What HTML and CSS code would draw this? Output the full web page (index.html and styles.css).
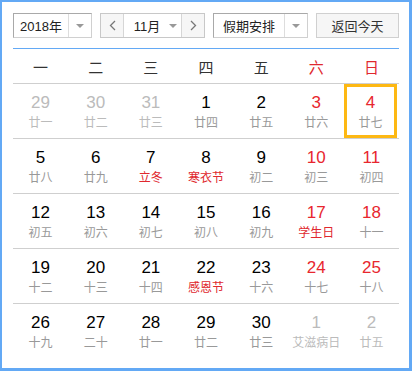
FILE: index.html
```html
<!DOCTYPE html>
<html lang="zh-CN">
<head>
    <meta charset="UTF-8">
    <title>万年历</title>
    <link rel="stylesheet" href="styles.css">
</head>
<body>
    <div class="calendar">
        <!-- Toolbar -->
        <div class="toolbar">
            <div class="select year">
                <span class="select-text">2018年</span>
                <span class="select-arrow"><i class="caret"></i></span>
            </div>
            <div class="month-group">
                <span class="nav-btn">
                    <svg width="7" height="11" viewBox="0 0 7 11"><polyline points="6,1 1.5,5.5 6,10" fill="none" stroke="#777" stroke-width="1.3"/></svg>
                </span>
                <span class="month-select">11月<i class="caret"></i></span>
                <span class="nav-btn">
                    <svg width="7" height="11" viewBox="0 0 7 11"><polyline points="1,1 5.5,5.5 1,10" fill="none" stroke="#777" stroke-width="1.3"/></svg>
                </span>
            </div>
            <div class="select holiday">
                <span class="select-text">假期安排</span>
                <span class="select-arrow"><i class="caret"></i></span>
            </div>
            <button class="today-btn">返回今天</button>
        </div>

        <!-- Week header -->
        <div class="week">
            <span>一</span><span>二</span><span>三</span><span>四</span><span>五</span>
            <span class="weekend">六</span><span class="weekend">日</span>
        </div>

        <!-- Days -->
        <div class="days">
            <div class="row">
                <div class="day other"><b>29</b><small>廿一</small></div>
                <div class="day other"><b>30</b><small>廿二</small></div>
                <div class="day other"><b>31</b><small>廿三</small></div>
                <div class="day"><b>1</b><small>廿四</small></div>
                <div class="day"><b>2</b><small>廿五</small></div>
                <div class="day weekend"><b>3</b><small>廿六</small></div>
                <div class="day weekend today"><b>4</b><small>廿七</small></div>
            </div>
            <div class="row">
                <div class="day"><b>5</b><small>廿八</small></div>
                <div class="day"><b>6</b><small>廿九</small></div>
                <div class="day"><b>7</b><small class="fest">立冬</small></div>
                <div class="day"><b>8</b><small class="fest">寒衣节</small></div>
                <div class="day"><b>9</b><small>初二</small></div>
                <div class="day weekend"><b>10</b><small>初三</small></div>
                <div class="day weekend"><b>11</b><small>初四</small></div>
            </div>
            <div class="row">
                <div class="day"><b>12</b><small>初五</small></div>
                <div class="day"><b>13</b><small>初六</small></div>
                <div class="day"><b>14</b><small>初七</small></div>
                <div class="day"><b>15</b><small>初八</small></div>
                <div class="day"><b>16</b><small>初九</small></div>
                <div class="day weekend"><b>17</b><small class="fest">学生日</small></div>
                <div class="day weekend"><b>18</b><small>十一</small></div>
            </div>
            <div class="row">
                <div class="day"><b>19</b><small>十二</small></div>
                <div class="day"><b>20</b><small>十三</small></div>
                <div class="day"><b>21</b><small>十四</small></div>
                <div class="day"><b>22</b><small class="fest">感恩节</small></div>
                <div class="day"><b>23</b><small>十六</small></div>
                <div class="day weekend"><b>24</b><small>十七</small></div>
                <div class="day weekend"><b>25</b><small>十八</small></div>
            </div>
            <div class="row">
                <div class="day"><b>26</b><small>十九</small></div>
                <div class="day"><b>27</b><small>二十</small></div>
                <div class="day"><b>28</b><small>廿一</small></div>
                <div class="day"><b>29</b><small>廿二</small></div>
                <div class="day"><b>30</b><small>廿三</small></div>
                <div class="day other"><b>1</b><small>艾滋病日</small></div>
                <div class="day other"><b>2</b><small>廿五</small></div>
            </div>
        </div>
    </div>
</body>
</html>
```

FILE: styles.css
```css
* {
    margin: 0;
    padding: 0;
    box-sizing: border-box;
}

body {
    font-family: 'Liberation Sans', 'Noto Sans CJK SC', sans-serif;
    background: #fff;
    color: #333;
}

.calendar {
    width: 412px;
    height: 371px;
    border: 3px solid #63a9f5;
    border-top-width: 2px;
    border-left-width: 2px;
    padding: 11px 10px 0 11px;
}

/* Toolbar */
.toolbar {
    display: flex;
    justify-content: space-between;
    height: 36px;
    padding-bottom: 10px;
    border-bottom: 1px solid #63a9f5;
}

.select {
    display: flex;
    height: 25px;
    border: 1px solid #a9a9a9;
    border-right-color: #d0d0d0;
    border-bottom-color: #d0d0d0;
    font-size: 13px;
    background: #fff;
}

.year { width: 79px; }
.holiday { width: 95px; }

.select-text {
    flex: 1;
    display: flex;
    align-items: center;
    justify-content: center;
    font-family: 'Liberation Sans', 'Noto Sans CJK SC', sans-serif;
    color: #222;
}

.select-arrow {
    width: 23px;
    display: flex;
    align-items: center;
    justify-content: center;
    border-left: 1px solid #ddd;
}

.caret {
    display: inline-block;
    width: 0;
    height: 0;
    border-left: 4px solid transparent;
    border-right: 4px solid transparent;
    border-top: 4px solid #999;
}

.month-group {
    display: flex;
    width: 105px;
    height: 25px;
    border: 1px solid #c8c8c8;
}

.nav-btn {
    width: 22px;
    display: flex;
    align-items: center;
    justify-content: center;
    background: #f6f6f6;
}

.month-select {
    flex: 1;
    display: flex;
    align-items: center;
    justify-content: center;
    gap: 9px;
    padding-left: 6px;
    border-left: 1px solid #d6d6d6;
    border-right: 1px solid #d6d6d6;
    font-size: 13px;
    color: #222;
}

.today-btn {
    width: 83px;
    height: 25px;
    border: 1px solid #d0d0d0;
    background: #f6f6f6;
    font-family: 'Noto Sans CJK SC', sans-serif;
    font-size: 13px;
    color: #333;
}

/* Week header */
.week {
    display: grid;
    grid-template-columns: repeat(7, 1fr);
    height: 35px;
    border-bottom: 1px solid #cfcfcf;
    font-family: 'Noto Sans CJK SC', sans-serif;
    font-size: 15px;
    color: #333;
}

.week span {
    display: flex;
    align-items: center;
    justify-content: center;
}

.week .weekend {
    color: #e0282e;
}

/* Day grid */
.row {
    display: grid;
    grid-template-columns: repeat(7, 1fr);
    height: 55px;
    border-bottom: 1px solid #cfcfcf;
}

.row:last-child {
    border-bottom: none;
}

.day {
    display: flex;
    flex-direction: column;
    align-items: center;
    padding-top: 9px;
}

.day b {
    font-weight: normal;
    font-size: 17px;
    line-height: 20px;
    color: #000;
}

.day small {
    margin-top: 1px;
    font-family: 'Noto Sans CJK SC', sans-serif;
    font-size: 12px;
    line-height: 16px;
    color: #999;
}

.day.weekend b {
    color: #e8262e;
}

.day small.fest {
    color: #e0282e;
}

.day.other b,
.day.other small {
    color: #bbb;
}

.day.today {
    border: 3px solid #fdb813;
    padding-top: 6px;
    margin-right: 2px;
}
```
